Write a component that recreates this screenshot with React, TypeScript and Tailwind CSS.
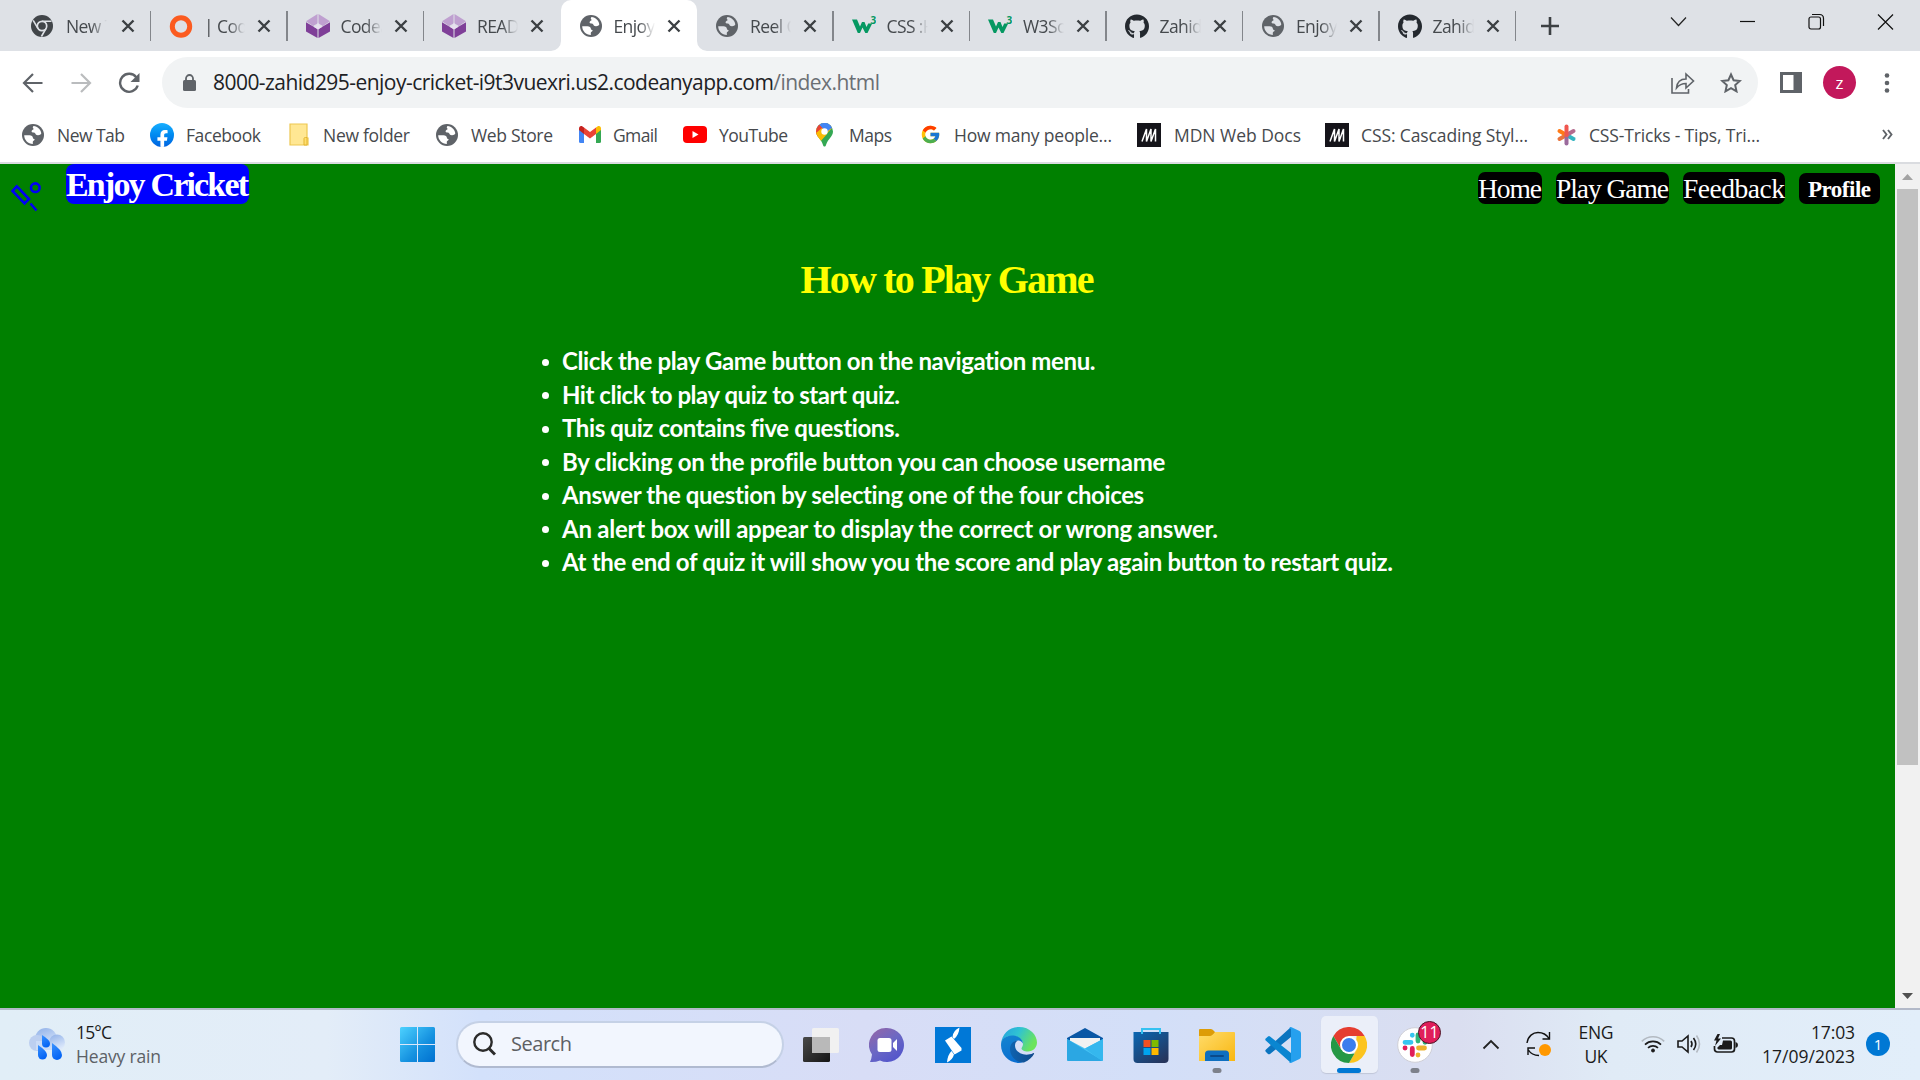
import React, { useLayoutEffect, useRef, useState } from "react";
import { FaGithub, FaFacebookF } from "react-icons/fa";
import { FcGoogle } from "react-icons/fc";

const UI = "font-['Open_Sans','Noto_Sans',sans-serif]";
const SERIF = "font-['Liberation_Serif',serif]";

/* Text spaced evenly so that it fills the given width. */
function Fit({ w, className = "", children }: { w: number; className?: string; children: React.ReactNode }) {
  const ref = useRef<HTMLSpanElement>(null);
  const [ls, setLs] = useState(0);
  useLayoutEffect(() => {
    const el = ref.current;
    if (!el) return;
    const n = (el.textContent || "").length;
    setLs((w - el.getBoundingClientRect().width) / Math.max(1, n - 1));
  }, [w]);
  return (
    <span className={"block shrink-0 whitespace-nowrap " + className} style={{ width: w }}>
      <span ref={ref} className="inline-block" style={{ letterSpacing: ls }}>{children}</span>
    </span>
  );
}

const Globe = ({ bg = "#fff" }: { bg?: string }) => (
  <svg width="22" height="22" viewBox="0 0 22 22">
    <circle cx="11" cy="11" r="11" fill="#5f6368" />
    <path fill={bg} d="M11.6 2.1c3.9.3 7.4 3.600 7.7 7.500-.7 1.300-1.900 1.800-3.500 1.700-1.500 0-2.100-.5-2.500-1.700-.2-.8-1-1.200-2.400-1.200-1.200 0-1.500-.8-1.200-1.700.4-1 1.700-.7 1.900-1.700.1-.7-.9-.8-.8-1.600.1-.7.400-1.100.8-1.300z" />
    <path fill={bg} d="M2.200 11.200h5.300c2 0 3.300 1 3.400 2.600.1 1 .8 1.200 1.600 1.300.5 1.500-1.500 1.500-1.700 2.600-.1.800.2 1.300 0 2.200-4.700 0-8.600-3.900-8.600-8.700z" />
  </svg>
);
const DarkChrome = () => (
  <svg width="22" height="22" viewBox="0 0 22 22">
    <circle cx="11" cy="11" r="11" fill="#414549" />
    <circle cx="11" cy="11" r="4.700" fill="none" stroke="#dee1e6" strokeWidth="1.700" />
    <path d="M11 6.200h9.500M6.900 13.400 2.200 5.300M15.100 13.400 10.400 21.500" stroke="#dee1e6" strokeWidth="1.600" />
  </svg>
);
const Ring = () => (
  <svg width="24" height="24" viewBox="0 0 24 24"><circle cx="12" cy="12.500" r="8.700" fill="none" stroke="#fb5b20" strokeWidth="5" /></svg>
);
const Cube = () => (
  <svg width="24" height="24" viewBox="0 0 24 24">
    <path d="M11.500 0v9.500L7 12 0 7.200zM12.500 0v9.500l4.500 2.500 7-4.800z" fill="#bfa0d0" />
    <path d="M0 8.200 11.500 15v9L0 17.500zM24 8.200 12.500 15v9L24 17.500z" fill="#7f3f98" />
    <path d="M12 8.500 13.500 12 16 13l-4 2.500L8 13l2.500-1z" fill="#e8dff0" />
  </svg>
);
const W3 = () => (
  <svg width="24" height="20" viewBox="0 0 24 20">
    <path d="M0 3.500h5l3 7 2-4.500h2.500l2 5 1.700-3.500h4L15.500 17h-2.200L10.500 11.500 8 17H5.800z" fill="#059862" />
    <text x="18.500" y="8" fontSize="10" fontWeight="700" fontFamily="Open Sans" fill="#059862">3</text>
  </svg>
);
const Cat = () => <FaGithub size={25} color="#24292f" />;

const tabs = [
  { t: "New Tab", i: <DarkChrome /> },
  { t: "| Code", i: <Ring /> },
  { t: "Codea", i: <Cube /> },
  { t: "README", i: <Cube /> },
  { t: "Enjoy C", i: <Globe />, active: true },
  { t: "Reel C", i: <Globe bg="#dee1e6" /> },
  { t: "CSS :H", i: <W3 /> },
  { t: "W3Sch", i: <W3 /> },
  { t: "Zahid2", i: <Cat /> },
  { t: "Enjoy C", i: <Globe bg="#dee1e6" /> },
  { t: "Zahid2", i: <Cat /> },
];

function Tab({ t, i, active, first, sep }: { t: string; i: React.ReactNode; active?: boolean; first: boolean; sep: boolean }) {
  return (
    <div className={"relative flex h-[51px] w-[136.500px] shrink-0 items-center " + (active ? "rounded-t-[10px] bg-white" : "")}>
      {active && (
        <>
          <svg className="absolute -left-[10px] bottom-0" width="10" height="10"><path d="M10 0v10H0A10 10 0 0 0 10 0z" fill="#fff" /></svg>
          <svg className="absolute -right-[10px] bottom-0" width="10" height="10"><path d="M0 0v10h10A10 10 0 0 1 0 0z" fill="#fff" /></svg>
        </>
      )}
      <div className={"flex w-6 justify-center pt-px " + (first ? "ml-[15.500px]" : "ml-[18px]")}>{i}</div>
      <div className={"w-[41px] overflow-hidden whitespace-nowrap text-[17.500px] leading-6 tracking-[-0.6px] text-[#45494d] [mask-image:linear-gradient(to_right,black_60%,transparent)] " + (first ? "ml-[12px]" : "ml-[11px]")}>{t}</div>
      <svg className={"mt-px " + (first ? "ml-[13.500px]" : "ml-[12px]")} width="14" height="14" viewBox="0 0 14 14"><path d="M1.500 1.500l11 11M12.500 1.500l-11 11" stroke="#3c4043" strokeWidth="2.400" /></svg>
      {sep && <div className="ml-auto h-[30px] w-[1.500px] bg-[#83868b]" />}
    </div>
  );
}

const Mdn = () => (
  <svg width="24" height="24" viewBox="0 0 24 24"><rect width="24" height="24" fill="#15141a" /><path d="M4 18.500 8.500 6v12.500L13 6v12.500L17.500 6v12.500" fill="none" stroke="#fff" strokeWidth="1.500" transform="translate(1 0)" /></svg>
);
const marks: { t: string; w: number; gap: number; iw: number; ml: number; i: React.ReactNode }[] = [
  { t: "New Tab", w: 68, ml: 22, iw: 22, gap: 13, i: <Globe /> },
  { t: "Facebook", w: 75, ml: 25, iw: 24, gap: 12, i: (
    <div className="flex h-6 w-6 items-end justify-center overflow-hidden rounded-full bg-linear-to-b from-[#19afff] to-[#0062e0]"><FaFacebookF size={19} color="#fff" className="translate-y-[2px]" /></div>) },
  { t: "New folder", w: 87, ml: 28, iw: 20, gap: 14, i: (
    <svg width="20" height="23" viewBox="0 0 20 23"><path d="M1 1h17v14h1v7H1z" fill="#ffe793" stroke="#edc750" strokeWidth="1.200" /><path d="M15 22v-6.500q0-1 1.500-1H18V22z" fill="#ffdf70" stroke="#e3b530" /></svg>) },
  { t: "Web Store", w: 82, ml: 26, iw: 22, gap: 13, i: <Globe /> },
  { t: "Gmail", w: 45, ml: 25.5, iw: 22, gap: 12.5, i: (
    <svg width="22" height="17" viewBox="0 0 22 17"><path d="M0 3v12.500Q0 17 1.500 17H5V7z" fill="#4285f4" /><path d="M22 3v12.500q0 1.500-1.500 1.500H17V7z" fill="#34a853" /><path d="M17 1.500 18.500.4C20 -.6 22 .3 22 2.500V4l-5 4z" fill="#fbbc04" /><path d="M5 1.500 3.500.4C2-.6 0 .3 0 2.500V4l5 4z" fill="#c5221f" /><path d="M5 1.500 11 6l6-4.500V8l-6 4.500L5 8z" fill="#ea4335" /></svg>) },
  { t: "YouTube", w: 69, ml: 25, iw: 24, gap: 12, i: (
    <svg width="24" height="17" viewBox="0 0 24 17"><rect width="24" height="17" rx="4" fill="#f00" /><path d="M9.500 5v7l6-3.500z" fill="#fff" /></svg>) },
  { t: "Maps", w: 43, ml: 28, iw: 17, gap: 16, i: (
    <svg width="17" height="24" viewBox="0 0 17 24">
      <defs><clipPath id="pin"><path d="M8.500 0A8.500 8.500 0 0 1 17 8.500c0 5-5 7-7 13.500-.5 2-2.500 2-3 0C5 15.500 0 13.500 0 8.500A8.500 8.500 0 0 1 8.500 0z" /></clipPath></defs>
      <g clipPath="url(#pin)"><rect width="17" height="24" fill="#34a853" /><path d="M0 0h17v4L4 18-2 12z" fill="#fbbc04" /><path d="M0 0h17v4.500L8.500 9 2 14z" fill="#4285f4" /><path d="M-1 3 3 1l5.500 6.500L1 15z" fill="#ea4335" /><path d="M0 10 6 5l5 6-7 8z" fill="#fbbc04" /><path d="M3 1 12-1l4 5-5 5z" fill="#4285f4" /></g><circle cx="8.500" cy="8.500" r="3.200" fill="#fff" /></svg>) },
  { t: "How many people...", w: 158, ml: 27, iw: 22, gap: 13, i: <FcGoogle size={21} /> },
  { t: "MDN Web Docs", w: 127, ml: 25, iw: 24, gap: 13, i: <Mdn /> },
  { t: "CSS: Cascading Styl...", w: 167, ml: 24, iw: 24, gap: 12, i: <Mdn /> },
  { t: "CSS-Tricks - Tips, Tri...", w: 171, ml: 28, iw: 21, gap: 12, i: (
    <svg width="21" height="22" viewBox="0 0 21 22" fill="none" strokeWidth="4" strokeLinecap="round"><path d="M10.500 11 17.500 15" stroke="#35b5c0" /><path d="M10.500 11 3.500 15" stroke="#e8743f" /><path d="M10.500 11v8.500" stroke="#9b6a9c" /><path d="M3.500 7l7 4" stroke="#ff7a18" /><path d="M17.500 7l-7 4" stroke="#b56a8e" /><path d="M10.500 2.500V11" stroke="#f0564f" /></svg>) },
];

const rules: [string, number][] = [
  ["Click the play Game button on the navigation menu.", 533],
  ["Hit click to play quiz to start quiz.", 338],
  ["This quiz contains five questions.", 338],
  ["By clicking on the profile button you can choose username", 602],
  ["Answer the question by selecting one of the four choices", 583],
  ["An alert box will appear to display the correct or wrong answer.", 656],
  ["At the end of quiz it will show you the score and play again button to restart quiz.", 830],
];

const TaskView = () => (
  <svg width="36" height="36" viewBox="0 0 36 36">
    <defs><linearGradient id="tv" x2="1" y2="1"><stop stopColor="#4a4a4a" /><stop offset="1" stopColor="#151515" /></linearGradient></defs>
    <rect y="10" width="27" height="25" rx="1.500" fill="url(#tv)" /><rect x="9" y="1" width="27" height="25" rx="1.500" fill="#f1f1f1" /><rect x="9" y="10" width="18" height="16" fill="#b9b9b9" />
  </svg>
);
const Chat = () => (
  <svg width="36" height="36" viewBox="0 0 36 36">
    <defs><linearGradient id="ch" x1=".1" y1="0" x2=".8" y2="1"><stop stopColor="#9467a8" /><stop offset=".5" stopColor="#6b68c4" /><stop offset="1" stopColor="#5053cc" /></linearGradient></defs>
    <path d="M18 1a17 17 0 1 1-7 32.500Q6 35.500 1 35q1.500-3 2-7.500A17 17 0 0 1 18 1z" fill="url(#ch)" />
    <rect x="8.500" y="11" width="14" height="14" rx="2.500" fill="#fff" /><path d="M24 16l4-4v12l-4-4z" fill="#fff" />
  </svg>
);
const Sharp = () => (
  <svg width="36" height="36" viewBox="0 0 36 36">
    <rect width="36" height="36" fill="#0078d7" />
    <path d="M10 13.500 16.500 9.500 26.500 21v2.500L19.500 27.500z" fill="#fff" />
    <path d="M24.500.5q-.5 7.500-5.500 11.500L17.500 10Q18 3.500 24.500.5zM12 35.500q.5-7.500 4.500-11.500l2.500 3.500Q17.500 33 12 35.500z" fill="#fff" />
  </svg>
);
const Edge = () => (
  <svg width="36" height="36" viewBox="0 0 36 36">
    <defs>
      <linearGradient id="e1" x2="1" y2=".4"><stop stopColor="#249fe0" /><stop offset=".5" stopColor="#30c3d2" /><stop offset="1" stopColor="#6be45c" /></linearGradient>
      <linearGradient id="e2" x2=".3" y2="1"><stop stopColor="#1485d0" /><stop offset="1" stopColor="#0b6fd0" /></linearGradient>
      <linearGradient id="e3" x2="1"><stop stopColor="#0f63b0" /><stop offset="1" stopColor="#114a8b" /></linearGradient>
    </defs>
    <path d="M0 17C1 7 8 0 18 0c11 0 18 8 18 15.500 0 5-4 9-9 9-4 0-6.500-1.500-6.500-3 0-1 1.500-2 1.500-4.500C22 11 15 9 10 9 4 9 1 13 0 17z" fill="url(#e1)" />
    <path d="M0 18C0 12 5 8.500 11 8.500c6 0 11 3.500 11 8.500 0-1-2-3.500-5-3.500-4 0-6 4-6 8 0 7 5 13 11 14C10 38 0 29 0 18z" fill="url(#e2)" />
    <path d="M17 13.500c-5 0-8 4-8 8.500 0 8 7 14 14 13.400C28 33.500 31.500 30 33 27c.4-.8-.2-1.200-1-.8C24 30 14 26 14 18.500c0-2.500 1.400-4.200 3-5z" fill="url(#e3)" />
  </svg>
);
const Mail = () => (
  <svg width="36" height="36" viewBox="0 0 36 36">
    <path d="M0 11 18 1l18 10v9H0z" fill="#0a57a5" /><path d="M3 11h30v4L18 24 3 15z" fill="#f2f2f2" />
    <path d="M0 12l18 9.500L36 12v20.500q0 1.500-1.500 1.500h-33Q0 34 0 32.500z" fill="#46c4f4" /><path d="M0 12 36 34H1.500Q0 34 0 32.500z" fill="#2ba7e3" /><path d="M36 12 18 21.500 35 34q1-.4 1-1.500z" fill="#35b7ee" />
  </svg>
);
const Store = () => (
  <svg width="36" height="36" viewBox="0 0 36 36">
    <defs><linearGradient id="st" x2=".8" y2="1"><stop stopColor="#0a67b3" /><stop offset="1" stopColor="#26355c" /></linearGradient></defs>
    <path d="M.500 5h35v27q0 4-4 4h-27q-4 0-4-4z" fill="url(#st)" /><path d="M9 7V2h18v5" fill="none" stroke="#35c1f1" strokeWidth="2" />
    <rect x="10.500" y="13" width="7" height="7" fill="#f25022" /><rect x="18.500" y="13" width="7" height="7" fill="#7fba00" /><rect x="10.500" y="21" width="7" height="7" fill="#00a4ef" /><rect x="18.500" y="21" width="7" height="7" fill="#ffb900" />
  </svg>
);
const Explorer = () => (
  <svg width="36" height="36" viewBox="0 0 36 36">
    <defs><linearGradient id="ex" x2="1" y2="1"><stop stopColor="#ffdc6b" /><stop offset="1" stopColor="#f9b711" /></linearGradient></defs>
    <path d="M0 3q0-1 1-1h11q1.500 0 4 3H34V14H0z" fill="#dd9c07" /><path d="M0 9h11q2 0 5-4h19q1 0 1 1v28H0z" fill="url(#ex)" />
    <path d="M6 34v-7q0-3.500 3.500-3.500h17Q30 23.500 30 27v7z" fill="#0f6fc0" /><rect x="11" y="28" width="14" height="2" rx="1" fill="#0a4a8a" />
  </svg>
);
const Code = () => (
  <svg width="36" height="36" viewBox="0 0 36 36">
    <path d="M26 0v10L5 27q-1 .7-2 0l-2-2q-1.500-1.200 0-2.500z" fill="#0b74bf" />
    <path d="M26 36V26L5 9.500q-1-.8-2 0l-2 1.800q-1.500 1.200 0 2.500z" fill="#0a86d1" />
    <path d="M26 0l8.500 4q1.500.8 1.500 2.500v23q0 1.700-1.500 2.500L26 36q-1.500 0-2-1 2 .5 2-1.500v-31Q26 1 24 1.500 24.500 0 26 0z" fill="#26a0ee" />
  </svg>
);
const Chrome = () => (
  <svg width="36" height="36" viewBox="0 0 36 36">
    <path d="M2.400 9A18 18 0 0 1 33.600 9H18L10.200 22.500z" fill="#e53d30" />
    <path d="M33.600 9A18 18 0 0 1 18 36l7.800-13.500V9z" fill="#fcc41f" />
    <path d="M2.400 9l7.800 13.500L18 27l5.500-.5L18 36A18 18 0 0 1 2.400 9z" fill="#259845" />
    <path d="M25.800 9h7.800l-7.800 13.500L18 36l5.500-9.500z" fill="#fcc41f" />
    <circle cx="18" cy="18" r="9" fill="#fff" /><circle cx="18" cy="18" r="7" fill="#3b7ded" />
  </svg>
);
const Slack = () => (
  <div className="relative h-9 w-9">
    <svg width="36" height="36" viewBox="0 0 36 36">
      <circle cx="18" cy="18" r="17.300" fill="#fff" stroke="#cfcfd6" />
      <g strokeWidth="4.800" strokeLinecap="round"><path d="M8 15.300h6M15.300 8.200v.1" stroke="#36c5f0" /><path d="M21 8v6M28 15.300h.1" stroke="#2eb67d" /><path d="M21.500 21h6M21 28v.1" stroke="#ecb22e" /><path d="M15.300 21.500v6M8 21h.1" stroke="#e01e5a" /></g>
    </svg>
    <div className="absolute -top-[6px] left-[21px] flex h-[23px] w-[23px] items-center justify-center rounded-full border-[1.500px] border-[#4a1525] bg-[#e01e5a] text-[16px] leading-none text-white">11</div>
  </div>
);

const apps: { i: React.ReactNode; dot?: boolean; active?: boolean }[] = [
  { i: <TaskView /> }, { i: <Chat /> }, { i: <Sharp /> }, { i: <Edge /> }, { i: <Mail /> }, { i: <Store /> },
  { i: <Explorer />, dot: true }, { i: <Code /> }, { i: <Chrome />, active: true }, { i: <Slack />, dot: true },
];

function Browser() {
  return (
    <header className={UI}>
      <div className="flex h-[51px] bg-[#dee1e6] pl-[14.500px]">
        {tabs.map((t, k) => <Tab key={k} {...t} first={k === 0} sep={k !== 3 && k !== 4} />)}
        <svg className="ml-[24px] mt-[16px] shrink-0" width="20" height="20" viewBox="0 0 20 20"><path d="M10 1v18M1 10h18" stroke="#3c4043" strokeWidth="2.600" /></svg>
        <div className="ml-auto flex shrink-0 pr-[26px] pt-[13px]">
          <svg width="17" height="18" viewBox="0 0 17 18"><path d="M1 4.500l7.500 8 7.500-8" fill="none" stroke="#222" strokeWidth="1.200" /></svg>
          <svg className="ml-[52px]" width="17" height="18" viewBox="0 0 17 18"><path d="M1 8.500h15" stroke="#111" strokeWidth="1.200" /></svg>
          <svg className="ml-[52px]" width="17" height="18" viewBox="0 0 17 18" fill="none" stroke="#111" strokeWidth="1.200"><rect x="1" y="4" width="11.500" height="12" rx="2" /><path d="M4 1.500h7.500Q15.500 1.500 15.500 5.500V13" /></svg>
          <svg className="ml-[52px]" width="17" height="18" viewBox="0 0 17 18"><path d="M1 1.500l15 15M16 1.500l-15 15" stroke="#111" strokeWidth="1.200" /></svg>
        </div>
      </div>
      <div className="flex h-[63px] items-center bg-white pl-[22px]">
        <svg width="22" height="22" viewBox="0 0 22 22" fill="none" stroke="#5f6368" strokeWidth="2.200"><path d="M20.500 11H2.500M11 2l-9 9 9 9" /></svg>
        <svg className="ml-[26px]" width="22" height="22" viewBox="0 0 22 22" fill="none" stroke="#babcbe" strokeWidth="2.200"><path d="M1.500 11h18M11 2l9 9-9 9" /></svg>
        <svg className="ml-[26px]" width="22" height="22" viewBox="0 0 22 22"><path d="M18.300 5.400A9 9 0 1 0 19.700 13.500" fill="none" stroke="#5f6368" strokeWidth="2.400" /><path d="M21.500 1v9h-9z" fill="#5f6368" /></svg>
        <div className="ml-[22px] flex h-[51px] w-[1596px] items-center rounded-full bg-[#f1f3f4] pl-[21px] pr-[16px]">
          <svg width="13" height="17" viewBox="0 0 13 17"><rect y="6" width="13" height="11" rx="1.500" fill="#5f6368" /><path d="M3 7V4.500a3.500 3.500 0 0 1 7 0V7" fill="none" stroke="#5f6368" strokeWidth="1.800" /></svg>
          <Fit w={667} className="ml-[17px] text-[21px] leading-none text-[#202124]">8000-zahid295-enjoy-cricket-i9t3vuexri.us2.codeanyapp.com<span className="text-[#6b6f74]">/index.html</span></Fit>
          <svg className="ml-auto" width="24" height="22" viewBox="0 0 24 22" fill="none" stroke="#5f6368" strokeWidth="1.600"><path d="M1 6v15h16.500v-4" /><path d="M5.500 16C6 10.500 9.500 7 15 7V2l7.500 7-7.500 7v-4.500c-4 0-7 1.500-9.500 4.500z" /></svg>
          <svg className="ml-[25px]" width="22" height="21" viewBox="0 0 22 21"><path d="M11 2.500l2.600 5.700 6.200.7-4.600 4.200 1.300 6.200L11 16.100l-5.500 3.200 1.300-6.200L2.200 8.900l6.200-.7z" fill="none" stroke="#5f6368" strokeWidth="2" /></svg>
        </div>
        <svg className="ml-[22px]" width="22" height="21" viewBox="0 0 22 21"><path d="M0 0h22v21H0zM3 3v15h10.500V3z" fillRule="evenodd" fill="#5f6368" /></svg>
        <div className="ml-[21px] flex h-[33px] w-[33px] items-center justify-center rounded-full bg-[#c2185b] text-[17px] leading-none font-normal text-white">z</div>
        <svg className="ml-[28px]" width="6" height="20" viewBox="0 0 6 20" fill="#5f6368"><circle cx="3" cy="2.500" r="2.300" /><circle cx="3" cy="10" r="2.300" /><circle cx="3" cy="17.500" r="2.300" /></svg>
      </div>
      <div className="flex h-[50px] items-center border-b-2 border-[#dadce0] bg-white pb-[7px]">
        {marks.map((m, k) => (
          <React.Fragment key={k}>
            <div className="flex shrink-0 items-center justify-center" style={{ marginLeft: m.ml, width: m.iw, marginRight: m.gap }}>{m.i}</div>
            <Fit w={m.w} className="text-[17.500px] leading-5 text-[#46494d]">{m.t}</Fit>
          </React.Fragment>
        ))}
        <svg className="ml-auto mr-[27px]" width="11" height="11" viewBox="0 0 11 11" fill="none" stroke="#5f6368" strokeWidth="1.900"><path d="M1 1l3.500 4.500L1 10M6 1l3.500 4.500L6 10" /></svg>
      </div>
    </header>
  );
}

function Page() {
  return (
    <div className="flex h-[844px]">
      <main className="w-[1895px] bg-[#008000]">
        <div className={"flex h-[76px] items-start " + SERIF}>
          <svg className="ml-[10px] mt-[17px]" width="32" height="32" viewBox="0 0 32 32" fill="none" stroke="#0000f5" strokeWidth="2.600"><path d="M6.800 5.300 19 18 14.500 22.500 2.500 10z" /><path d="M20.500 22.500 26.500 29.500" /><circle cx="25.300" cy="6.700" r="4.300" /></svg>
          <div className="ml-[24px] h-[40px] rounded-[8px] bg-[#0000ff] pt-[5px] text-white"><Fit w={183} className="text-[34px] leading-[31px] font-bold">Enjoy Cricket</Fit></div>
          <nav className="ml-auto mr-[15px] flex items-start gap-[14px] pt-[8px] text-[27.500px] leading-[34px] text-white">
            <div className="h-8 rounded-[7px] bg-black"><Fit w={64}>Home</Fit></div>
            <div className="h-8 rounded-[7px] bg-black"><Fit w={113}>Play Game</Fit></div>
            <div className="h-8 rounded-[7px] bg-black"><Fit w={102}>Feedback</Fit></div>
            <div className="mt-px h-[31px] rounded-[7px] bg-black px-[9px]"><Fit w={63} className="text-[23px] leading-[34px] font-bold">Profile</Fit></div>
          </nav>
        </div>
        <div className={"flex h-[79px] items-center justify-center " + SERIF}>
          <h1><Fit w={294} className="text-[40px] leading-none font-bold text-[#ffff00]">How to Play Game</Fit></h1>
        </div>
        <ul className="mt-[25px] ml-[541px] font-['Lato',sans-serif] text-[24px] leading-[33.500px] font-bold text-white">
          {rules.map(([t, w]) => (
            <li key={t} className="flex items-center"><span className="mr-[13px] ml-px mt-[3px] h-[7px] w-[7px] rounded-full bg-white" /><Fit w={w}>{t}</Fit></li>
          ))}
        </ul>
      </main>
      <div className="flex w-[25px] flex-col items-center bg-[#f1f1f1]">
        <svg className="mt-[10px]" width="11" height="6"><path d="M0 6 5.500 0 11 6z" fill="#a3a3a3" /></svg>
        <div className="mt-[9px] h-[576px] w-[21px] bg-[#c1c1c1]" />
        <svg className="mt-auto mb-[9px]" width="11" height="6"><path d="M0 0h11L5.500 6z" fill="#505050" /></svg>
      </div>
    </div>
  );
}

function Taskbar() {
  return (
    <footer className={"flex h-[72px] items-center border-t-2 border-[#b2b9c8] bg-[linear-gradient(90deg,#e1eef7_0%,#e3edf8_17%,#d3e1fb_25%,#d8ddf6_45%,#d3dff8_60%,#dadef0_76%,#e0ebf6_84%,#e2eefa_100%)] pb-[2px] " + UI}>
      <svg className="ml-[28px] shrink-0" width="38" height="34" viewBox="0 0 38 34">
        <defs>
          <linearGradient id="cl" x2=".4" y2="1"><stop stopColor="#8fb0e8" /><stop offset="1" stopColor="#dde9fb" /></linearGradient>
          <linearGradient id="dr" x2=".4" y2="1"><stop stopColor="#3b93ff" /><stop offset="1" stopColor="#0565f5" /></linearGradient>
        </defs>
        <circle cx="18" cy="12" r="11" fill="url(#cl)" /><circle cx="9" cy="16" r="8" fill="#bccff0" /><rect x="8" y="14" width="22" height="9" fill="#cbdcf7" /><circle cx="29" cy="15.500" r="8" fill="url(#cl)" />
        <g fill="url(#dr)"><path d="M14 8q8 5 8 8.500a4 4 0 0 1-8 0z" /><path d="M10 18q9 6 9 10a4.500 4.500 0 0 1-9 0z" /><path d="M24 16q10 7 10 12a5 5 0 0 1-10 0z" /></g>
      </svg>
      <div className="ml-[10px] w-[101px] shrink-0 text-[17.500px] leading-6">
        <Fit w={36} className="text-[#1b1b1b]">15°C</Fit>
        <Fit w={85} className="text-[#5d6166]">Heavy rain</Fit>
      </div>
      <svg className="ml-[223px] shrink-0" width="35" height="35" viewBox="0 0 35 35">
        <defs><linearGradient id="wn" gradientUnits="userSpaceOnUse" x1="0" y1="0" x2="35" y2="35"><stop stopColor="#4dd2ff" /><stop offset=".6" stopColor="#1490df" /><stop offset="1" stopColor="#0070d0" /></linearGradient></defs>
        <path fill="url(#wn)" d="M1.500 0H17v17H0V1.500Q0 0 1.500 0zM18 0h15.500Q35 0 35 1.500V17H18zM0 18h17v17H1.500Q0 35 0 33.500zM18 18h17v15.500q0 1.500-1.500 1.500H18z" />
      </svg>
      <div className="ml-[21px] flex h-[47px] w-[328px] shrink-0 items-center rounded-full border-2 border-[#c5d1e6] border-b-[#b0bad0] bg-[#f2f6fe] pl-[15px]">
        <svg width="23" height="24" viewBox="0 0 23 24" fill="none" stroke="#2b2b2b" strokeWidth="2.400"><circle cx="10" cy="10" r="8.700" /><path d="M16 16.500l6 6" strokeWidth="3" /></svg>
        <Fit w={61} className="ml-[15px] text-[20px] leading-6 text-[#5d5f63]">Search</Fit>
      </div>
      <div className="ml-[4px] flex shrink-0">
        {apps.map((a, k) => (
          <div key={k} className="flex h-[70px] w-[66px] items-start justify-center pt-[7px]">
            <div className={"relative flex h-[57px] w-[57px] items-center justify-center rounded-[5px] " + (a.active ? "bg-[#ebeff9] shadow-[0_1px_1px_#c0c6d8]" : "")}>
              {a.i}
              {a.dot && <div className="absolute bottom-0 left-1/2 h-[5px] w-[9px] -translate-x-1/2 rounded-full bg-[#7d818b]" />}
              {a.active && <div className="absolute bottom-0 left-1/2 h-[5px] w-[24px] -translate-x-1/2 rounded-full bg-[#0078d4]" />}
            </div>
          </div>
        ))}
      </div>
      <div className="ml-[34px] flex shrink-0 items-center text-[17.500px] leading-6 text-[#1b1b1b]">
        <svg width="18" height="11" viewBox="0 0 18 11"><path d="M1.500 9.500 9 2l7.500 7.500" fill="none" stroke="#222" strokeWidth="1.800" /></svg>
        <svg className="ml-[26px]" width="26" height="26" viewBox="0 0 26 26"><path d="M1 12C2 5 7 1.500 12 1.500c5 0 8.500 2 11 6M23.500 1v7h-7M13 24.500c-5 0-8.500-2-11-6M2 24v-7h7" fill="none" stroke="#111" strokeWidth="1.400" /><circle cx="19" cy="19" r="6" fill="#ff9800" /></svg>
        <div className="ml-[26px] flex w-[36px] flex-col items-center"><Fit w={35}>ENG</Fit><Fit w={23}>UK</Fit></div>
        <svg className="ml-[27px]" width="24" height="18" viewBox="0 0 24 18" fill="none" strokeWidth="1.700"><path d="M.8 6.300a16 16 0 0 1 22.400 0" stroke="#b3bac2" /><path d="M4 9.600a11.500 11.500 0 0 1 16 0M7 12.800a7.500 7.500 0 0 1 10 0" stroke="#1b1b1b" /><circle cx="12" cy="15.500" r="1.500" fill="#1b1b1b" stroke="#1b1b1b" strokeWidth="1" /></svg>
        <svg className="ml-[12px]" width="25" height="20" viewBox="0 0 25 20" fill="none" stroke="#1b1b1b" strokeWidth="1.600"><path d="M1 7v6h4l6 5V2L5 7zM14 7q2 3 0 6M16.500 4q4.500 6 0 12" /><path d="M19.500 1.500q6 8.500 0 17" stroke="#b3bac2" /></svg>
        <svg className="ml-[11px]" width="26" height="20" viewBox="0 0 26 20"><path d="M9 4h9.500Q21.500 4 21.500 7v8q0 3-3 3h-14q-3 0-3-3v-3" fill="none" stroke="#1b1b1b" strokeWidth="1.700" /><path d="M10 6.500h7.500q1.500 0 1.500 1.500v6q0 1.500-1.500 1.500h-12L4 14l3-3h2zM22.500 8q2.500.5 2.500 3t-2.500 3z" fill="#1b1b1b" /><path d="M4.500 0 1 6.500h2.500L2 12l6-7.500H5L7 0z" fill="#1b1b1b" /></svg>
        <div className="ml-[23px] flex w-[93px] flex-col items-end"><Fit w={44}>17:03</Fit><Fit w={93}>17/09/2023</Fit></div>
        <div className="ml-[11px] flex h-6 w-6 items-center justify-center rounded-full bg-[#0078d4] text-[15px] leading-none text-white">1</div>
      </div>
    </footer>
  );
}

export default function App() {
  return (
    <div className="h-[1080px] w-[1920px] overflow-hidden bg-white">
      <Browser />
      <Page />
      <Taskbar />
    </div>
  );
}
